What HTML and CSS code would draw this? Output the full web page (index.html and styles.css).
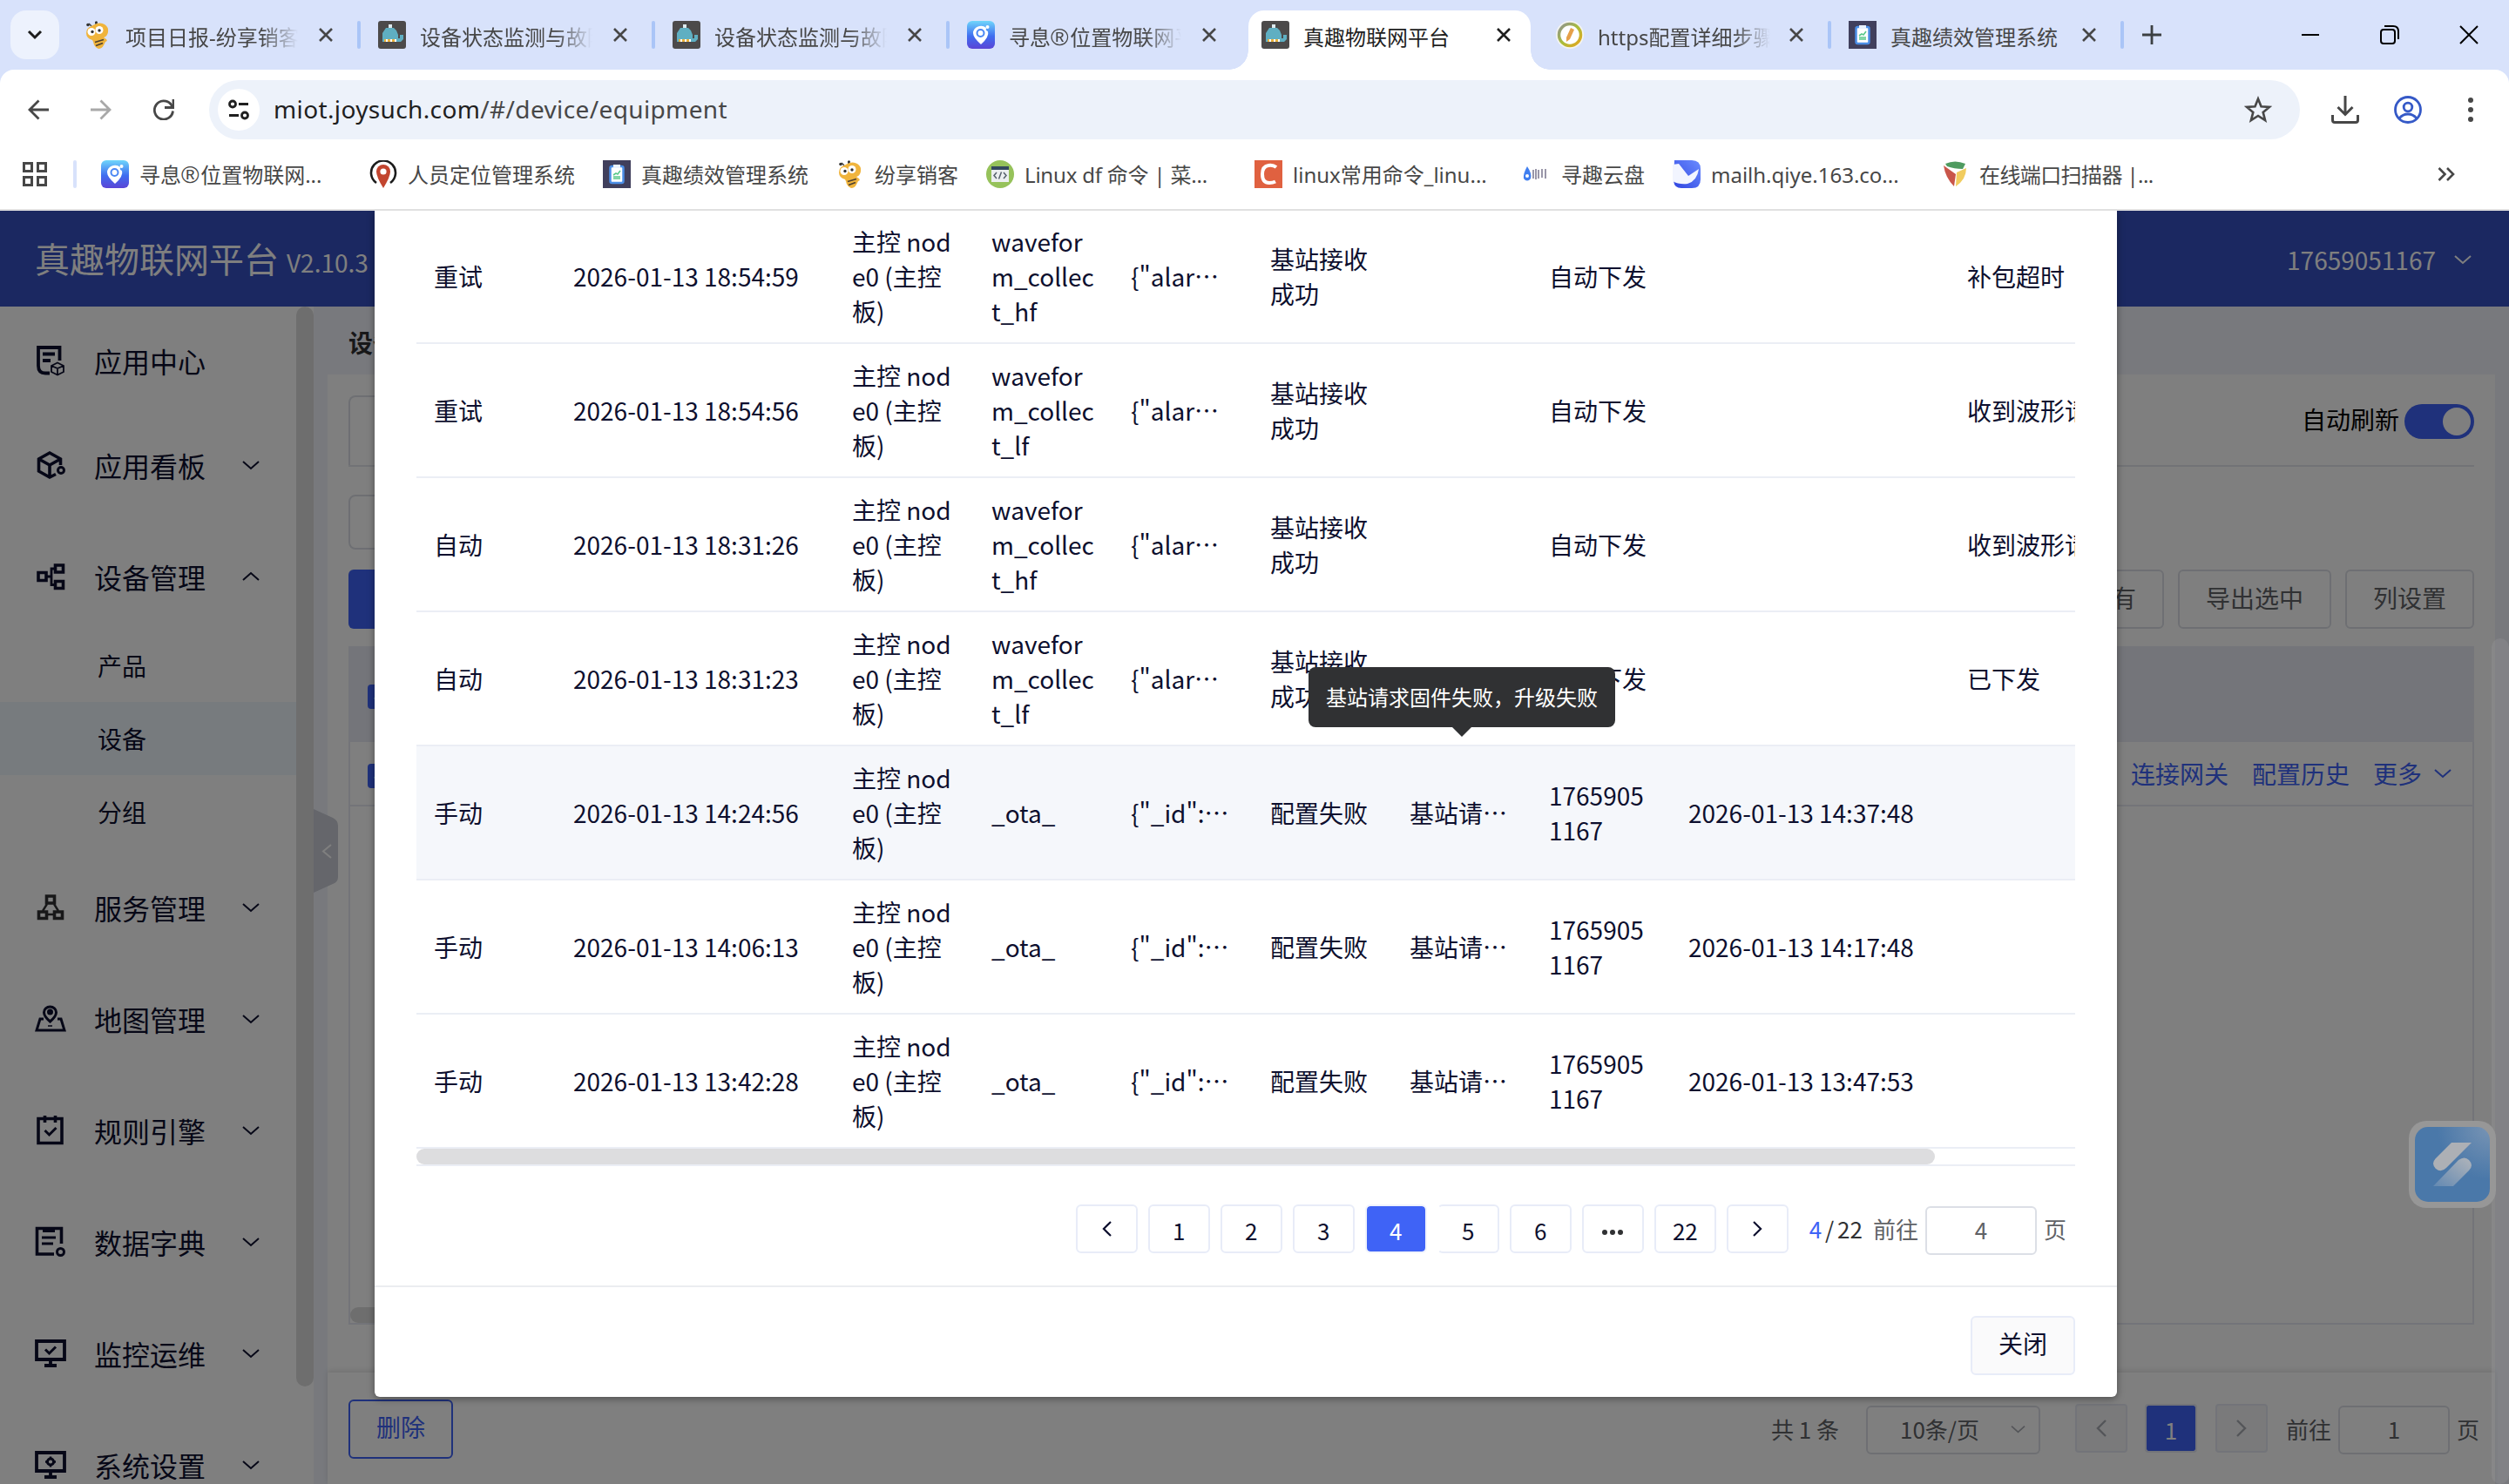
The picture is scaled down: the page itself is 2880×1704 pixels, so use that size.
FILE: index.html
```html
<!DOCTYPE html>
<html lang="zh-CN">
<head>
<meta charset="utf-8">
<title>真趣物联网平台</title>
<link rel="stylesheet" href="styles.css">
</head>
<body>
<svg class="defs" width="0" height="0">
  <defs>
    <linearGradient id="pinGrad" x1="0" y1="0" x2="0" y2="1"><stop offset="0" stop-color="#6fd6fb"/><stop offset=".55" stop-color="#3f6df0"/><stop offset="1" stop-color="#5b45d6"/></linearGradient>
    <linearGradient id="mailGrad" x1="1" y1="0" x2="0" y2="1"><stop offset="0" stop-color="#6b8cff"/><stop offset="1" stop-color="#2f45e0"/></linearGradient>
    <linearGradient id="tailGrad" x1="1" y1="0" x2="0" y2="1"><stop offset="0" stop-color="#b0b4ba"/><stop offset="1" stop-color="#6389b2"/></linearGradient>
    <radialGradient id="glow" cx="1" cy="0" r=".7"><stop offset="0" stop-color="#7894b4"/><stop offset="1" stop-color="#4a78a9"/></radialGradient>
    <linearGradient id="ringGrad" x1="0" y1="0" x2="1" y2="1"><stop offset="0" stop-color="#8d9196"/><stop offset=".5" stop-color="#a9bd3a"/><stop offset="1" stop-color="#e8a51c"/></linearGradient>
  </defs>
  <symbol id="bee" viewBox="0 0 32 32">
    <path d="M9 6 6 3M14 5V1" stroke="#444" stroke-width="1.500"/><circle cx="5" cy="4.500" r="1.800" fill="#333"/><circle cx="14.500" cy="1.700" r="1.500" fill="#333"/>
    <path d="M9 6q9-6 15-2 5 3 4 9-1 5-5 6l3 2q2 2-1 3l-2 4q-2 4-6 4-5-2-6-8l-1-2Q3 20 3 14q0-6 6-8z" fill="#f0b43c"/>
    <circle cx="9" cy="12.500" r="4.500" fill="#fff"/><circle cx="18" cy="10.500" r="4.500" fill="#fff"/><circle cx="10" cy="12.500" r="1.700" fill="#333"/><circle cx="18" cy="11" r="1.700" fill="#333"/>
    <path d="M13 24.500l10-3M14 28.500l8-3" stroke="#4d4030" stroke-width="1.800"/>
  </symbol>
  <symbol id="whale" viewBox="0 0 32 32">
    <rect width="32" height="32" rx="3" fill="#4c4a4a"/>
    <path d="M12 4h4v4h-4z" fill="#dce9ee"/><path d="M9 8h9l3 3 2 5v4h2v-4h4v5l-3 3H5V14z" fill="#5fafc2"/><path d="M7 21h14v3H7z" fill="#e9b23c"/><path d="M9 21h2v3H9zM14 21h2v3h-2zM19 21h2v3h-2z" fill="#fff"/>
  </symbol>
  <symbol id="pin" viewBox="0 0 32 32">
    <rect width="32" height="32" rx="6" fill="url(#pinGrad)"/>
    <path d="M16 27Q7 19 7 14a9 8.500 0 0 1 15-6q-1 3 2 4 2 6-8 15z" fill="#fff"/><circle cx="15.500" cy="14" r="4" fill="none" stroke="#4a86f4" stroke-width="2"/><circle cx="23.500" cy="7" r="2" fill="#fff"/>
  </symbol>
  <symbol id="clip" viewBox="0 0 32 32">
    <rect width="32" height="32" fill="#403f5c"/><rect x="8.500" y="7" width="15" height="19" rx="2" fill="#fff" stroke="#4b8ee6" stroke-width="2.500"/><path d="M12 5h8v4h-8z" fill="#e9f2ff"/><path d="M12 17l3-2 2 1 3-4M12 21h8M12 19h8" fill="none" stroke="#59c98a" stroke-width="1.600"/>
  </symbol>
  <symbol id="pencil" viewBox="0 0 32 32">
    <circle cx="16" cy="16" r="16" fill="#f4f4f0"/><circle cx="16" cy="16" r="12.500" fill="#fff" stroke="url(#ringGrad)" stroke-width="3.500"/><path d="M17 8l4 2-5 11-4 3v-5z" fill="#e6a04a"/>
  </symbol>
  <symbol id="locator" viewBox="0 0 32 32">
    <path d="M8 26A14 14 0 1 1 24 26" fill="none" stroke="#1c1c1c" stroke-width="2.600"/><path d="M16 32Q8 19 8 13a8 8 0 0 1 16 0q0 6-8 19z" fill="#c2452f"/><circle cx="16" cy="13" r="3.600" fill="#fff"/>
  </symbol>
  <symbol id="runoob" viewBox="0 0 32 32">
    <circle cx="16" cy="16" r="16" fill="#96c25a"/><rect x="6" y="7" width="20" height="18" fill="#eceff0"/><rect x="6" y="7" width="20" height="4" fill="#34495e"/><path d="M12 14l-3 3.500 3 3.500M20 14l3 3.500-3 3.500M17.500 13.500l-3 8" fill="none" stroke="#55606b" stroke-width="1.500"/>
  </symbol>
  <symbol id="csdn" viewBox="0 0 32 32">
    <rect width="32" height="32" fill="#e06140"/><path d="M25 8q-4-3-9-2-7 1-7 10 0 10 8 10 4 0 7-1.500" fill="none" stroke="#fff" stroke-width="4"/>
  </symbol>
  <symbol id="cloud" viewBox="0 0 32 32">
    <path d="M5 7q6 9 4 14-4 5-8 0-1-5 4-14z" fill="#3f7ef0"/><circle cx="5" cy="18" r="2" fill="#fff"/><path d="M12 11v10M15 10v12M18 11v10M22 10v10M26 10v11" stroke="#8f8ca0" stroke-width="1.800"/>
  </symbol>
  <symbol id="mail" viewBox="0 0 32 32">
    <path d="M2 0h20q10 0 10 10v12q0 10-10 10H10Q2 32 1 24z" fill="url(#mailGrad)"/><path d="M0 5l7-1 11 14 12-8q-2 14-13 17Q7 28 0 24z" fill="#f2f5ff"/>
  </symbol>
  <symbol id="shield" viewBox="0 0 32 32">
    <path d="M5 4q11-5 23 0l-3 6q-10 0-18-3z" fill="#4f9b60"/><path d="M3 6l14 10-2 14Q5 20 3 6z" fill="#c9564a"/><path d="M18 14l11-5q0 13-12 21z" fill="#f1cc5e"/>
  </symbol>
  <symbol id="down" viewBox="0 0 20 12"><path d="M1 2l9 8 9-8" fill="none" stroke="currentColor" stroke-width="2"/></symbol>
  <symbol id="x" viewBox="0 0 16 16"><path d="M1 1l14 14M15 1L1 15" fill="none" stroke="currentColor" stroke-width="2.600"/></symbol>
  <symbol id="left" viewBox="0 0 12 20"><path d="M11 1L2 10l9 9" fill="none" stroke="currentColor" stroke-width="2.400"/></symbol>
  <symbol id="right" viewBox="0 0 12 20"><path d="M1 1l9 9-9 9" fill="none" stroke="currentColor" stroke-width="2.400"/></symbol>
</svg>

<div class="browser">
  <div class="tabstrip">
    <button class="tabsearch"><svg width="18" height="12" viewBox="0 0 18 12"><path d="M2 2l7 7 7-7" fill="none" stroke="#1c1c1c" stroke-width="3"/></svg></button>
    <div class="tab first"><svg class="fav"><use href="#bee"/></svg><span class="label fade">项目日报-纷享销客</span><svg class="close"><use href="#x"/></svg></div>
    <div class="tab"><svg class="fav"><use href="#whale"/></svg><span class="label fade">设备状态监测与故障</span><svg class="close"><use href="#x"/></svg></div>
    <div class="tab"><svg class="fav"><use href="#whale"/></svg><span class="label fade">设备状态监测与故障</span><svg class="close"><use href="#x"/></svg></div>
    <div class="tab nosep"><svg class="fav"><use href="#pin"/></svg><span class="label fade">寻息<span class="reg">®</span>位置物联网平台</span><svg class="close"><use href="#x"/></svg></div>
    <div class="tab active"><svg class="fav"><use href="#whale"/></svg><span class="label">真趣物联网平台</span><svg class="close"><use href="#x"/></svg></div>
    <div class="tab"><svg class="fav"><use href="#pencil"/></svg><span class="label fade">https配置详细步骤</span><svg class="close"><use href="#x"/></svg></div>
    <div class="tab"><svg class="fav"><use href="#clip"/></svg><span class="label">真趣绩效管理系统</span><svg class="close"><use href="#x"/></svg></div>
    <svg class="newtab" width="22" height="22" viewBox="0 0 22 22"><path d="M11 0v22M0 11h22" stroke="#3c4043" stroke-width="2.800"/></svg>
    <div class="winctl">
      <svg width="22" height="22" viewBox="0 0 22 22"><path d="M1 11h20" stroke="#000" stroke-width="2"/></svg>
      <svg width="22" height="22" viewBox="0 0 22 22" fill="none" stroke="#000" stroke-width="2"><rect x="1" y="5" width="16" height="16" rx="3"/><path d="M5 1h10q6 0 6 6v9"/></svg>
      <svg width="22" height="22" viewBox="0 0 22 22"><path d="M1 1l20 20M21 1L1 21" stroke="#000" stroke-width="2"/></svg>
    </div>
  </div>
  <div class="toolbar">
    <div class="navbtns">
      <svg width="24" height="24" viewBox="0 0 24 24" fill="none" stroke="#474747" stroke-width="2.800"><path d="M24 12H2M12.500 1.500L2 12l10.500 10.500"/></svg>
      <svg width="24" height="24" viewBox="0 0 24 24" fill="none" stroke="#a8a8a8" stroke-width="2.800"><path d="M0 12h22M11.500 1.500L22 12 11.500 22.500"/></svg>
      <svg width="24" height="24" viewBox="0 0 24 24" fill="none" stroke="#474747" stroke-width="2.800"><path d="M22.500 13.500A10.600 10.600 0 1 1 20 5.500l2 3"/><path d="M23 0v9.500h-10"/></svg>
    </div>
    <div class="omnibox">
      <span class="tune"><svg width="24" height="24" viewBox="0 0 24 24" fill="none" stroke="#1f1f1f" stroke-width="2.800"><circle cx="5" cy="5.500" r="3.500"/><path d="M12 5.500h11M1 18.500h11"/><circle cx="19" cy="18.500" r="3.500"/></svg></span>
      <span class="url"><b>miot.joysuch.com</b>/#/device/equipment</span>
      <svg class="star" width="32" height="32" viewBox="0 0 32 32"><path d="M16 3.500l3.500 8.800 9.500.6-7.300 6 2.400 9.200L16 23l-8.100 5.100 2.400-9.200-7.300-6 9.500-.6z" fill="none" stroke="#474747" stroke-width="2.600"/></svg>
    </div>
    <div class="actions">
      <svg width="32" height="32" viewBox="0 0 32 32" fill="none" stroke="#474747" stroke-width="3"><path d="M16 0v21M7.500 13l8.500 8.500 8.500-8.500M1.500 22v6q0 2.500 2.500 2.500h24q2.500 0 2.500-2.500v-6"/></svg>
      <svg width="32" height="32" viewBox="0 0 32 32" fill="none" stroke="#3559c7" stroke-width="2.800"><circle cx="16" cy="16" r="14.500"/><circle cx="16" cy="13" r="4.800"/><path d="M6 26q4-5 10-5t10 5"/></svg>
      <svg width="32" height="32" viewBox="0 0 32 32" fill="#474747"><circle cx="16" cy="5" r="3"/><circle cx="16" cy="16" r="3"/><circle cx="16" cy="27" r="3"/></svg>
    </div>
  </div>
  <div class="bookmarks">
    <svg class="apps" width="28" height="28" viewBox="0 0 28 28" fill="none" stroke="#474747" stroke-width="3"><path d="M1.500 1.500h9v9h-9zM17.500 1.500h9v9h-9zM1.500 17.500h9v9h-9zM17.500 17.500h9v9h-9z"/></svg>
    <span class="bsep"></span>
    <div class="marks">
      <a><svg class="fav"><use href="#pin"/></svg><span>寻息<span class="reg">®</span>位置物联网...</span></a>
      <a><svg class="fav"><use href="#locator"/></svg><span>人员定位管理系统</span></a>
      <a><svg class="fav"><use href="#clip"/></svg><span>真趣绩效管理系统</span></a>
      <a><svg class="fav"><use href="#bee"/></svg><span>纷享销客</span></a>
      <a><svg class="fav"><use href="#runoob"/></svg><span class="tight">Linux df 命令 | 菜...</span></a>
      <a><svg class="fav"><use href="#csdn"/></svg><span>linux常用命令_linu...</span></a>
      <a><svg class="fav"><use href="#cloud"/></svg><span>寻趣云盘</span></a>
      <a><svg class="fav"><use href="#mail"/></svg><span>mailh.qiye.163.co...</span></a>
      <a><svg class="fav"><use href="#shield"/></svg><span class="tighter">在线端口扫描器 |...</span></a>
    </div>
    <svg class="more" width="20" height="16" viewBox="0 0 20 16"><path d="M1.500 1l7 7-7 7M11 1l7 7-7 7" fill="none" stroke="#474747" stroke-width="2.600"/></svg>
  </div>
</div>

<div class="app">
  <header class="topbar">
    <div class="brand">真趣物联网平台<small>V2.10.3</small></div>
    <div class="user">17659051167<svg width="22" height="12"><use href="#down"/></svg></div>
  </header>
  <div class="body">
    <nav class="side">
      <div class="item top"><svg class="ico" viewBox="0 0 36 36" fill="none" stroke="currentColor" stroke-width="3.800"><path d="M28.500 18V3H4v21q0 8.500 8 8.500h5"/><path d="M9 10.500h14M9 18h9"/><path stroke-width="1.800" d="M26 20.500l7 3.500v7l-7 3.500-7-3.500v-7zM19 24l7 3 7-3M26 27v7"/></svg><span>应用中心</span></div>
      <div class="item"><svg class="ico" viewBox="0 0 36 36" fill="none" stroke="currentColor" stroke-width="3.600"><path d="M29.500 18v-7L17 4 4.500 11v14L17 32l7-3.500M4.500 11L17 18l12.500-7M17 18v14"/><circle cx="30" cy="24" r="3.500" stroke-width="3"/></svg><span>应用看板</span><svg class="chev"><use href="#down"/></svg></div>
      <div class="item open"><svg class="ico" viewBox="0 0 36 36" fill="none" stroke="currentColor" stroke-width="3.600"><path d="M4 13.500h9v9H4zM23.500 5h9v8h-9zM23.500 23.500h9v8h-9z"/><path stroke-width="2.800" d="M13 18h5M24 9h-5v18.500h5"/></svg><span>设备管理</span><svg class="chev up"><use href="#down"/></svg></div>
      <div class="sub"><a>产品</a><a class="on">设备</a><a>分组</a></div>
      <div class="item"><svg class="ico gray" viewBox="0 0 36 36" fill="none" stroke="currentColor" stroke-width="3.600"><path d="M13.500 5h9v8h-9zM4.500 23h9v7.500h-9zM22.500 23h9v7.500h-9z"/><path stroke-width="2.400" d="M14 14l-5 8M22 14l5 8M14 26h8"/></svg><span>服务管理</span><svg class="chev"><use href="#down"/></svg></div>
      <div class="item"><svg class="ico" viewBox="0 0 36 36" fill="none" stroke="currentColor" stroke-width="3"><path d="M10 18H6L2 31h32l-4-13h-4"/><path d="M17.500 21q-7-6-7-10.500a7 6.500 0 0 1 14 0q0 4.500-7 10.500z"/><circle cx="17.500" cy="10" r="2" fill="currentColor"/><path d="M15 26h5" stroke-width="1.500"/></svg><span>地图管理</span><svg class="chev"><use href="#down"/></svg></div>
      <div class="item"><svg class="ico" viewBox="0 0 36 36" fill="none" stroke="currentColor" stroke-width="3.600"><path d="M4 4.500h27v28H4z"/><path d="M11.500 1v8M23.500 1v8"/><path d="M11.500 18l5 5 8-8" stroke-width="3"/></svg><span>规则引擎</span><svg class="chev"><use href="#down"/></svg></div>
      <div class="item"><svg class="ico" viewBox="0 0 36 36" fill="none" stroke="currentColor" stroke-width="3.600"><path d="M30.500 20V2.500h-28V32H22"/><path d="M9 5h14" stroke-width="4"/><path d="M8 13h16M8 20h13" stroke-width="3"/><circle cx="29.500" cy="29.500" r="4" stroke-width="3"/></svg><span>数据字典</span><svg class="chev"><use href="#down"/></svg></div>
      <div class="item"><svg class="ico" viewBox="0 0 36 36" fill="none" stroke="currentColor" stroke-width="3.800"><path d="M2 4h32v21H2z"/><path d="M11 32h14M18 25v6"/><path d="M12 13.500l4.500 4.500L24 10.500" stroke-width="3"/></svg><span>监控运维</span><svg class="chev"><use href="#down"/></svg></div>
      <div class="item"><svg class="ico" viewBox="0 0 36 36" fill="none" stroke="currentColor" stroke-width="3.800"><path d="M2 4h32v21H2z"/><path d="M11 32h14M18 25v6"/><circle cx="18" cy="14.500" r="3.600" stroke-width="3"/><path d="M18 8.500v3M18 17.500v3M12 14.500h3M21 14.500h3" stroke-width="2.500"/></svg><span>系统设置</span><svg class="chev"><use href="#down"/></svg></div>
    </nav>
    <div class="track"><div class="thumb"></div></div>
    <main class="main">
      <h1>设备</h1>
      <section class="card">
        <div class="tabsrow"><div class="tabbox"></div><div class="auto"><span>自动刷新</span><span class="switch"><i></i></span></div></div>
        <div class="filters"><div class="field"></div></div>
        <div class="tools"><button class="primary">新增</button><div class="right"><button>导出所有</button><button>导出选中</button><button>列设置</button></div></div>
        <div class="grid">
          <div class="ghead"><span class="check">✓</span></div>
          <div class="grow"><span class="check">✓</span><div class="links"><a>连接网关</a><a>配置历史</a><a>更多<svg width="22" height="12"><use href="#down"/></svg></a></div></div>
          <div class="gfill"><div class="gbar"></div></div>
        </div>
      </section>
      <footer class="foot">
        <button class="del">删除</button>
        <div class="pager">
          <span class="total">共 1 条</span>
          <span class="size">10条/页<svg width="17" height="10"><use href="#down"/></svg></span>
          <span class="pb"><svg width="12" height="20"><use href="#left"/></svg></span>
          <span class="pb cur">1</span>
          <span class="pb"><svg width="12" height="20"><use href="#right"/></svg></span>
          <span class="go">前往</span><span class="num">1</span><span>页</span>
        </div>
      </footer>
      <div class="handle"><svg width="29" height="97" viewBox="0 0 29 97"><path d="M0 0l22 10q6 3 6 9v59q0 6-6 8L0 96z" fill="#cacdd6"/><path d="M20 41l-9 7.500 9 7.500" fill="none" stroke="#fff" stroke-width="2"/></svg></div>
    </main>
  </div>

  <div class="mask">
    <div class="modal">
      <div class="tablewrap">
        <table>
          <colgroup><col class="n"><col class="w"><col class="n"><col class="n"><col class="n"><col class="n"><col class="n"><col class="n"><col class="w"><col class="n"></colgroup>
          <tbody>
          <tr><td>重试</td><td>2026-01-13 18:54:59</td><td>主控 node0 (主控板)</td><td>waveform_collect_hf</td><td>{"alar…</td><td>基站接收成功</td><td></td><td>自动下发</td><td></td><td class="nw">补包超时</td></tr>
          <tr><td>重试</td><td>2026-01-13 18:54:56</td><td>主控 node0 (主控板)</td><td>waveform_collect_lf</td><td>{"alar…</td><td>基站接收成功</td><td></td><td>自动下发</td><td></td><td class="nw">收到波形请求</td></tr>
          <tr><td>自动</td><td>2026-01-13 18:31:26</td><td>主控 node0 (主控板)</td><td>waveform_collect_hf</td><td>{"alar…</td><td>基站接收成功</td><td></td><td>自动下发</td><td></td><td class="nw">收到波形请求</td></tr>
          <tr><td>自动</td><td>2026-01-13 18:31:23</td><td>主控 node0 (主控板)</td><td>waveform_collect_lf</td><td>{"alar…</td><td>基站接收成功</td><td></td><td>自动下发</td><td></td><td class="nw">已下发</td></tr>
          <tr class="hover"><td>手动</td><td>2026-01-13 14:24:56</td><td>主控 node0 (主控板)</td><td>_ota_</td><td>{"_id":…</td><td>配置失败</td><td>基站请…</td><td>17659051167</td><td>2026-01-13 14:37:48</td><td></td></tr>
          <tr><td>手动</td><td>2026-01-13 14:06:13</td><td>主控 node0 (主控板)</td><td>_ota_</td><td>{"_id":…</td><td>配置失败</td><td>基站请…</td><td>17659051167</td><td>2026-01-13 14:17:48</td><td></td></tr>
          <tr><td>手动</td><td>2026-01-13 13:42:28</td><td>主控 node0 (主控板)</td><td>_ota_</td><td>{"_id":…</td><td>配置失败</td><td>基站请…</td><td>17659051167</td><td>2026-01-13 13:47:53</td><td></td></tr>
          </tbody>
        </table>
        <div class="hbar"><div></div></div>
      </div>
      <div class="pages">
        <span class="p"><svg width="11" height="18"><use href="#left"/></svg></span>
        <span class="p">1</span><span class="p">2</span><span class="p">3</span><span class="p cur">4</span><span class="p nol">5</span><span class="p">6</span>
        <span class="p"><svg class="dots" width="24" height="6" viewBox="0 0 24 6" fill="#303133"><circle cx="3" cy="3" r="3"/><circle cx="12" cy="3" r="3"/><circle cx="21" cy="3" r="3"/></svg></span>
        <span class="p">22</span>
        <span class="p"><svg width="11" height="18"><use href="#right"/></svg></span>
        <span class="count"><em>4</em> / 22</span>
        <span class="goto">前往</span><span class="num">4</span><span class="goto">页</span>
      </div>
      <div class="mfoot"><button>关闭</button></div>
      <div class="tip">基站请求固件失败，升级失败</div>
    </div>
  </div>
  <div class="pagebar"></div>
  <div class="float"><svg width="100" height="100" viewBox="0 0 100 100"><rect width="100" height="100" rx="20" fill="#979797"/><rect x="7" y="7" width="86" height="86" rx="15" fill="url(#glow)"/><path d="M49 25h23L43 54q-6 6-12 1-6-6 0-12z" fill="#adb0b5"/><path d="M51 75H28L57 45q7-5 12 0 6 6 0 12z" fill="url(#tailGrad)"/></svg></div>
</div>
</body>
</html>
```
FILE: styles.css
```css
* { box-sizing: border-box; }
body {
  margin: 0;
  width: 2880px;
  height: 1704px;
  overflow: hidden;
  font: 28px/40px "Noto Sans CJK SC", sans-serif;
  color: #0d0f2e;
}
button { font: inherit; padding: 0; background: #fff; }
svg { display: block; flex: none; }
.defs { position: absolute; }

/* browser chrome */
.browser {
  height: 242px;
  background: #d8e2fb;
  border-bottom: 2px solid #e0e0e0;
  font: 24px/32px "Noto Sans", "Noto Sans CJK SC", sans-serif;
  color: #474747;
}
.reg { font: 28px/1 "Liberation Sans", sans-serif; letter-spacing: 1.500px; }
.fav { width: 32px; height: 32px; }
.tabstrip { display: flex; height: 80px; padding: 12px 0 0 12px; }
.tabsearch {
  display: grid;
  place-items: center;
  width: 56px;
  height: 56px;
  border: 0;
  border-radius: 18px;
  background: #edf2fd;
}
.tab {
  display: flex;
  flex: none;
  align-items: center;
  position: relative;
  width: 338px;
  height: 56px;
  padding-left: 22px;
}
.tab.first { margin-left: 6px; }
.tab::after {
  content: "";
  flex: none;
  margin-left: 28px;
  width: 4px;
  height: 32px;
  border-radius: 2px;
  background: #aac5f7;
}
.tab.nosep::after, .tab.active::after { visibility: hidden; }
.label { flex: none; width: 200px; height: 32px; margin: 5px 0 0 16px; overflow: hidden; white-space: nowrap; }
.label.fade { -webkit-mask-image: linear-gradient(90deg, #000 78%, transparent 99%); mask-image: linear-gradient(90deg, #000 78%, transparent 99%); }
.close { width: 16px; height: 16px; margin-left: 22px; color: #474747; }
.tab.active {
  height: 68px;
  width: 324px;
  margin: 0 7px 0 7px;
  padding: 0 0 12px 15px;
  border-radius: 18px 18px 0 0;
  background: #fff;
  color: #1f1f1f;
}
.tab.active .close { color: #1f1f1f; }
.tab.active ~ .tab { width: 336px; }
.tab.active ~ .tab .close { margin-left: 20px; }
.tab.active::before {
  content: "";
  position: absolute;
  left: -22px;
  right: -22px;
  bottom: 0;
  height: 22px;
  background:
    radial-gradient(circle at 0 0, transparent 21.500px, #fff 22px) left / 22px 22px no-repeat,
    radial-gradient(circle at 100% 0, transparent 21.500px, #fff 22px) right / 22px 22px no-repeat;
}
.newtab { margin: 17px 0 0 23px; }
.winctl { display: flex; gap: 69px; margin: 17px 35px 0 auto; }
.toolbar {
  display: flex;
  align-items: center;
  height: 80px;
  padding-top: 12px;
  background: #fff;
  border-radius: 16px 16px 0 0;
}
.navbtns { display: flex; gap: 48px; margin-left: 32px; }
.omnibox {
  display: flex;
  align-items: center;
  width: 2400px;
  height: 68px;
  margin-left: 40px;
  padding: 0 32px 0 10px;
  border-radius: 34px;
  background: #edf2fa;
}
.tune { display: grid; place-items: center; width: 48px; height: 48px; border-radius: 50%; background: #fff; }
.url { margin: -2px 0 0 16px; font-size: 28px; line-height: 40px; letter-spacing: .37px; color: #474747; }
.url b { font-weight: 400; color: #1f1f1f; }
.star { margin-left: auto; }
.actions { display: flex; gap: 40px; margin-left: 36px; }
.bookmarks { display: flex; align-items: center; height: 80px; padding: 0 62px 0 26px; background: #fff; }
.bsep { width: 4px; height: 32px; margin: 0 28px 0 30px; border-radius: 2px; background: #d8e2fb; }
.marks { display: grid; grid-template-columns: 308px 268px 268px 172px 308px 308px 172px 308px 308px; }
.marks a { display: flex; align-items: center; height: 32px; white-space: pre; }
.marks a > span { height: 32px; padding-top: 1px; }
.marks .fav { margin-right: 12px; }
.tight { letter-spacing: -.2px; }
.tighter { letter-spacing: -.6px; }
.more { margin-left: auto; }

/* application shell */
.app { position: relative; height: 1462px; overflow: hidden; background: #fff; }
.topbar {
  display: flex;
  justify-content: space-between;
  align-items: center;
  height: 110px;
  padding: 2px 42px 0 40px;
  background: #3650c2;
  color: #fff;
}
.brand { display: flex; align-items: baseline; font-size: 40px; line-height: 56px; }
.brand small { margin-left: 9px; font-size: 28px; }
.user { display: flex; align-items: center; gap: 20px; }
.body { display: flex; height: 1352px; }
.side { width: 340px; overflow: hidden; }
.item { display: flex; align-items: center; height: 128px; padding-left: 40px; font-size: 32px; }
.item.top { height: 120px; padding-top: 8px; }
.item.open { height: 122px; padding-top: 6px; }
.ico { width: 36px; height: 36px; margin: -4px 32px 0 0; }
.ico.gray { color: #303133; }
.item > span { width: 128px; margin-top: -4px; }
.chev { width: 20px; height: 12px; margin: -5px 0 0 42px; }
.up { transform: rotate(180deg); }
.sub { padding-bottom: 6px; }
.sub a { display: block; height: 84px; padding-left: 112px; line-height: 84px; }
.sub .on { background: #eff7fc; }
.track { width: 20px; }
.thumb { height: 1240px; border-radius: 10px; background: #dddddd; }
.main {
  position: relative;
  display: flex;
  flex-direction: column;
  width: 2520px;
  padding: 0 16px;
  background: #f0f3fb;
}
h1 { margin: 0; height: 78px; padding: 0 0 0 24px; font-size: 28px; line-height: 82px; color: #303133; }
.card { display: flex; flex-direction: column; height: 1146px; padding: 24px 24px 55px; background: #fff; }
.tabsrow { display: flex; justify-content: space-between; height: 82px; border-bottom: 2px solid #e4e7ed; }
.tabbox { width: 600px; border: 2px solid #dcdfe6; border-bottom: 0; border-radius: 8px 8px 0 0; }
.auto { display: flex; height: 60px; align-items: center; gap: 6px; color: #000; }
.auto > span:first-child { margin-top: -6px; }
.switch { width: 80px; height: 40px; margin-top: 0; padding: 4px; border-radius: 20px; background: #3f63f6; }
.switch i { display: block; width: 32px; height: 32px; margin-left: auto; border-radius: 50%; background: #fff; }
.filters { padding: 32px 0 23px; }
.field { width: 400px; height: 63px; border: 2px solid #dcdfe6; border-radius: 8px; }
.tools, .right { display: flex; justify-content: space-between; gap: 16px; }
.tools button { height: 68px; padding: 0 30px 5px; border: 2px solid #dcdfe6; border-radius: 6px; color: #606266; }
.tools .primary { border: 0; width: 148px; color: #fff; background: #3f63f6; }
.grid { flex: 1; display: flex; flex-direction: column; margin-top: 20px; border: 2px solid #e6e9f3; border-top: 0; }
.ghead { display: flex; align-items: center; height: 110px; margin: 0 -2px; padding: 10px 0 0 22px; background: #e8ebf4; }
.check { width: 28px; height: 28px; margin-top: -4px; border-radius: 4px; background: #3f63f6; color: #fff; font-size: 20px; line-height: 28px; text-align: center; }
.grow { display: flex; justify-content: space-between; align-items: center; height: 74px; padding: 6px 23px 0 20px; border-bottom: 2px solid #e6e9f3; color: #3f63f6; }
.grow .check { margin-top: -1px; }
.links { display: flex; gap: 27px; margin-top: -6px; }
.links a { display: flex; align-items: center; gap: 13px; }
.gfill { flex: 1; display: flex; align-items: flex-end; }
.gbar { width: 1600px; height: 18px; border-radius: 9px; background: #dddddd; }
.foot { display: flex; flex: 1; justify-content: space-between; align-items: flex-start; padding: 31px 18px 0 24px; background: #fff; box-shadow: 0 -2px 6px rgba(0, 0, 0, .12); }
.del { width: 120px; height: 68px; padding-bottom: 6px; border: 2px solid #3f63f6; border-radius: 6px; color: #3f63f6; line-height: 56px; }
.pager { display: flex; align-items: center; height: 56px; margin-top: 7px; font-size: 26px; color: #606266; }
.pager > span:not(.size):not(.pb):not(.num) { margin-top: -2px; }
.size { display: flex; align-items: center; justify-content: space-between; width: 200px; height: 56px; margin: 0 40px 0 31px; padding: 0 15px 2px 37px; border: 2px solid #dcdfe6; border-radius: 6px; }
.size svg { color: #a8abb2; }
.pb { display: grid; place-items: center; width: 60px; height: 56px; margin: -4px 21px 0 0; border: 2px solid #e6e9f3; border-radius: 4px; background: #f4f4f6; color: #a8abb2; }
.pb.cur { border-color: #e6e9f3; background: #3f63f6 padding-box; color: #fff; padding-top: 3px; margin-left: -1px; }
.num { width: 128px; height: 56px; border: 2px solid #dcdfe6; border-radius: 6px; margin: 0 8px; text-align: center; line-height: 50px; color: #606266; }
.handle { position: absolute; left: 0; top: 577px; }

/* history dialog */
.mask { position: absolute; inset: 0; display: flex; justify-content: center; align-items: flex-start; padding-right: 20px; background: rgba(0, 0, 0, .5); }
.modal { position: relative; display: flex; flex-direction: column; width: 2000px; height: 1362px; border-radius: 0 0 6px 6px; background: #fff; box-shadow: 0 2px 8px rgba(0, 0, 0, .4); }
.tablewrap { margin: -1px 48px 0; width: 1904px; overflow: hidden; }
table { width: 1920px; table-layout: fixed; border-collapse: separate; border-spacing: 0; }
col.n { width: 160px; }
col.w { width: 320px; }
td { height: 154px; padding: 0 20px; border-bottom: 2px solid #ebeef5; vertical-align: middle; word-break: break-all; }
td.nw { white-space: nowrap; }
.hover td { background: #f5f7fb; }
.hbar { height: 20px; border-bottom: 2px solid #ebeef5; }
.hbar div { width: 1743px; height: 18px; border-radius: 9px; background: #dddddf; }
.pages { display: flex; align-items: center; justify-content: flex-end; height: 56px; margin: 44px 58px 0 0; font-size: 26px; }
.p { display: grid; place-items: center; width: 71px; height: 56px; margin-right: 12px; padding-top: 3px; border: 2px solid #e8ecf8; border-radius: 6px; }
.p svg { margin-top: -4px; }
.p .dots { margin-top: 4px; }
.p.cur { background: #3f63f6 padding-box; border-color: #f0f3fc; color: #fff; }
.nol { border-left-color: transparent; }
.count { margin-left: 12px; color: #303133; word-spacing: -2px; }
.count em { font-style: normal; color: #3f63f6; }
.goto { margin-left: 12px; color: #606266; }
.num + .goto { margin-left: 0; }
.pages .num { margin: 4px 8px 0; }
.mfoot { display: flex; justify-content: flex-end; margin-top: 37px; padding: 33px 48px 0 0; border-top: 2px solid #ebedf0; }
.mfoot button { width: 120px; height: 68px; padding-bottom: 6px; border: 2px solid #e8ecf8; border-radius: 6px; background: #fafafb; color: #0d0f2e; }
.tip { position: absolute; left: 1072px; top: 524px; width: 352px; height: 69px; border-radius: 8px; background: #303133; color: #fff; font-size: 24px; line-height: 67px; text-align: center; white-space: nowrap; }
.tip::after { content: ""; position: absolute; left: 164px; top: 68px; border: 12px solid transparent; border-top-color: #303133; border-bottom: 0; }
.pagebar { position: absolute; right: 0; top: 491px; width: 20px; height: 971px; border-radius: 10px; background: rgba(160, 160, 165, .25); }
.float { position: absolute; left: 2765px; top: 1045px; }
```
